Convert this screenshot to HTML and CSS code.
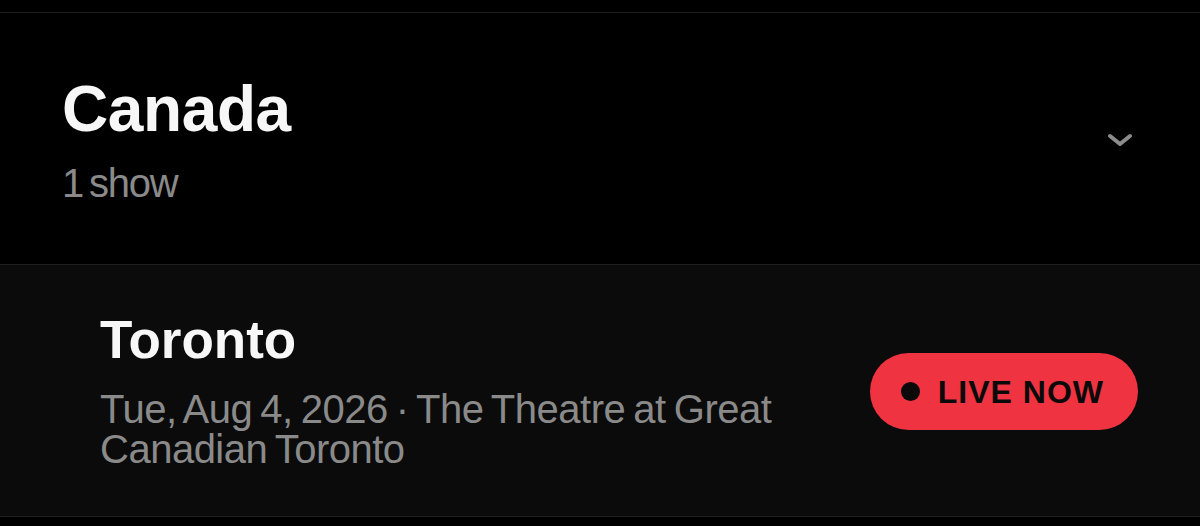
FILE: index.html
```html
<!DOCTYPE html>
<html lang="en">
<head>
<meta charset="utf-8">
<title>Shows</title>
<link rel="stylesheet" href="styles.css">
</head>
<body>
  <div class="list">
    <div class="region">
      <div class="region-text">
        <h2 class="region-name">Canada</h2>
        <div class="region-count">1 show</div>
      </div>
      <svg class="chevron" width="26" height="14" viewBox="0 0 26 14" aria-hidden="true">
        <path d="M3 3 L13 11 L23 3" fill="none" stroke="#8c8c8c" stroke-width="4" stroke-linecap="round" stroke-linejoin="round"/>
      </svg>
    </div>
    <div class="show">
      <div class="show-text">
        <h3 class="show-city">Toronto</h3>
        <div class="show-meta">Tue, Aug 4, 2026 · The Theatre at Great Canadian Toronto</div>
      </div>
      <div class="live-badge"><span class="live-dot"></span><span class="live-label">LIVE NOW</span></div>
    </div>
  </div>
</body>
</html>
```

FILE: styles.css
```css
html, body {
  margin: 0;
  padding: 0;
  background: #000;
}
body {
  font-family: "Liberation Sans", Arial, sans-serif;
  padding-top: 12px;
}
.list {
  border-top: 1px solid #1c1c1c;
}
.region {
  display: flex;
  align-items: center;
  justify-content: space-between;
  padding: 60px 67px 59px 62px;
  background: #000;
}
.region-name {
  margin: 0;
  font-size: 64px;
  line-height: 72px;
  font-weight: 700;
  color: #f7f7f7;
  letter-spacing: -0.4px;
}
.region-count {
  margin-top: 16px;
  font-size: 40px;
  line-height: 44px;
  color: #8a8a8a;
  letter-spacing: -1.2px;
  word-spacing: -4px;
}
.chevron {
  display: block;
  margin-top: 1px;
}
.show {
  display: flex;
  align-items: center;
  gap: 40px;
  padding: 45px 62px 47px 100px;
  background: #0b0b0b;
  border-top: 1px solid #1e1e1e;
  border-bottom: 1px solid #1e1e1e;
}
.show-text {
  flex: 1;
  min-width: 0;
  max-width: 700px;
}
.show-city {
  margin: 0;
  font-size: 53px;
  line-height: 60px;
  font-weight: 700;
  color: #f7f7f7;
}
.show-meta {
  margin-top: 19px;
  font-size: 40px;
  line-height: 40px;
  color: #8a8a8a;
  letter-spacing: -0.5px;
  word-spacing: -2.5px;
}
.live-badge {
  margin-left: auto;
  margin-top: 4px;
  display: flex;
  align-items: center;
  gap: 18px;
  height: 77px;
  box-sizing: border-box;
  padding: 0 34px 0 31px;
  background: #ef3340;
  border-radius: 39px;
}
.live-dot {
  width: 19px;
  height: 19px;
  border-radius: 50%;
  background: #0a0a0a;
  flex: none;
}
.live-label {
  font-size: 32px;
  line-height: 1;
  font-weight: 700;
  color: #0a0a0a;
  letter-spacing: 1px;
}
```
